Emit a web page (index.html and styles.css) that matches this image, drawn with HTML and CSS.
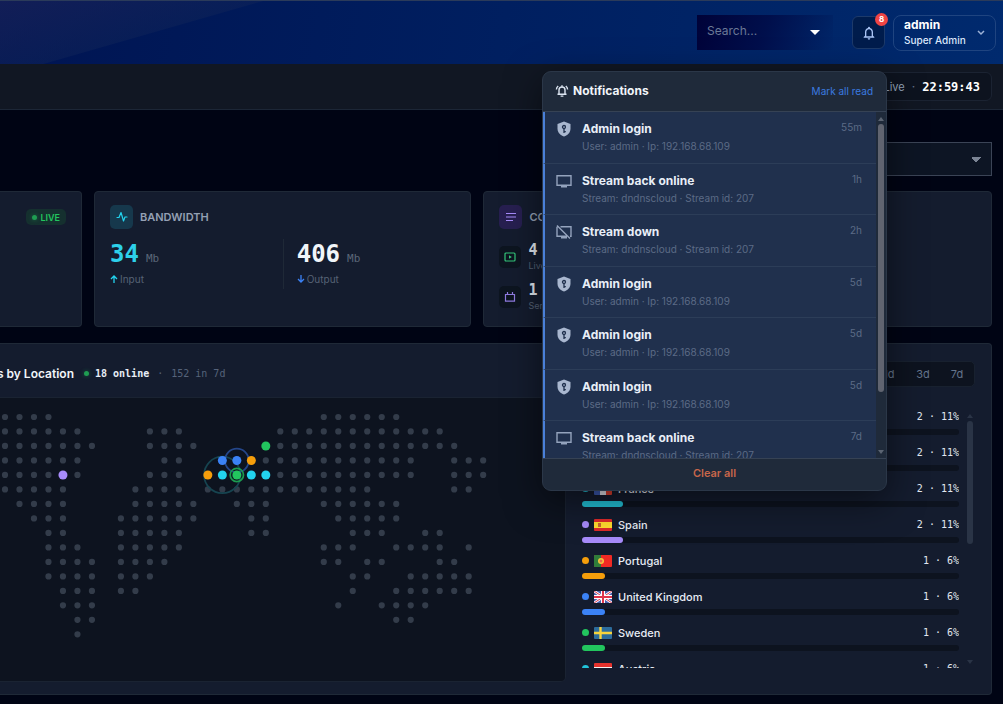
FILE: index.html
```html
<!DOCTYPE html>
<html lang="en">

<head>
    <meta charset="UTF-8">
    <meta name="viewport" content="width=device-width, initial-scale=1.0">
    <title>Dashboard</title>
    <link rel="stylesheet" href="styles.css">
</head>

<body>
    <!-- Top bar -->
    <header class="topbar">
        <div class="search">
            <input type="text" class="search-input" placeholder="Search..." aria-label="Search">
            <button class="search-toggle" aria-label="Search options">
                <svg width="10" height="5" viewBox="0 0 10 5"><path d="M0 0h10L5 5z" fill="#fff"/></svg>
            </button>
        </div>
        <button class="bell-button" aria-label="Notifications">
            <svg width="16" height="16" viewBox="0 0 24 24" fill="#a9c4f5"><path d="M12 22a2 2 0 0 0 2-2h-4a2 2 0 0 0 2 2zm6-6v-5c0-3.070-1.630-5.640-4.500-6.320V4a1.500 1.500 0 0 0-3 0v.68C7.640 5.360 6 7.920 6 11v5l-2 2v1h16v-1l-2-2zm-2 1H8v-6c0-2.480 1.510-4.500 4-4.500s4 2.020 4 4.500v6z"/></svg>
            <span class="badge">8</span>
        </button>
        <button class="user-button">
            <span class="user-text">
                <span class="user-name">admin</span>
                <span class="user-role">Super Admin</span>
            </span>
            <svg width="8" height="6" viewBox="0 0 8 6" fill="none" stroke="#9db2d6" stroke-width="1.5"><path d="M1 1l3 3 3-3"/></svg>
        </button>
    </header>

    <div class="subbar">
        <div class="clock">
            <span class="clock-live">Live</span>
            <span class="clock-sep">·</span>
            <time class="clock-time">22:59:43</time>
        </div>
    </div>

    <main class="content">
        <div class="toolbar">
            <select class="server-select" aria-label="Server">
                <option></option>
            </select>
        </div>

        <!-- Stat cards -->
        <section class="cards">
            <article class="card card-first">
                <span class="live-pill"><i class="live-dot"></i>LIVE</span>
            </article>

            <article class="card">
                <div class="card-head">
                    <span class="card-icon icon-cyan">
                        <svg width="12" height="12" viewBox="0 0 12 12" fill="none" stroke="#22d3ee" stroke-width="1.2" stroke-linejoin="round" stroke-linecap="round"><path d="M1 6.500h2l2-5 2.500 8.500L9 6h2"/></svg>
                    </span>
                    <h2 class="card-title">BANDWIDTH</h2>
                </div>
                <div class="band">
                    <div class="band-col">
                        <div class="band-value cyan">34<small>Mb</small></div>
                        <div class="band-label">
                            <svg width="8" height="8" viewBox="0 0 8 8" fill="none" stroke="#22d3ee" stroke-width="1.3"><path d="M4 8V1M1 4l3-3 3 3"/></svg>
                            Input
                        </div>
                    </div>
                    <div class="band-col">
                        <div class="band-value">406<small>Mb</small></div>
                        <div class="band-label">
                            <svg width="8" height="8" viewBox="0 0 8 8" fill="none" stroke="#3b82f6" stroke-width="1.3"><path d="M4 0v7M1 4l3 3 3-3"/></svg>
                            Output
                        </div>
                    </div>
                </div>
            </article>

            <article class="card">
                <div class="card-head">
                    <span class="card-icon icon-purple">
                        <svg width="12" height="12" viewBox="0 0 12 12" stroke="#a78bfa" stroke-width="1.2"><path d="M1 2.500h10M1 6h10M1 9.500h7"/></svg>
                    </span>
                    <h2 class="card-title">CONTENT</h2>
                </div>
                <div class="counts">
                    <div class="count">
                        <span class="count-icon">
                            <svg width="12" height="10" viewBox="0 0 12 10" fill="none" stroke="#34c77b" stroke-width="1.2"><rect x="1" y="1" width="10" height="8" rx="1"/><path d="M5 3.200v3.600L7.800 5z" fill="#34c77b" stroke="none"/></svg>
                        </span>
                        <div>
                            <div class="count-value">4</div>
                            <div class="count-label">Live</div>
                        </div>
                    </div>
                    <div class="count">
                        <span class="count-icon">
                            <svg width="12" height="10" viewBox="0 0 12 10" fill="none" stroke="#8f7be0" stroke-width="1.2"><path d="M1.500 2.500h9v6.700h-9zM3.500 0v2.500M8.500 0v2.500"/></svg>
                        </span>
                        <div>
                            <div class="count-value">1</div>
                            <div class="count-label">Series</div>
                        </div>
                    </div>
                </div>
            </article>
        </section>

        <!-- Locations -->
        <section class="panel">
            <div class="map-col">
                <div class="map-head">
                    <h2 class="map-title">s by Location</h2>
                    <i class="live-dot"></i>
                    <p class="map-meta"><b>18 online</b><span>·</span><span>152 in 7d</span></p>
                </div>
                <div class="map">
                    <svg viewBox="0 0 565 283" role="img" aria-label="World map">
                        <!-- every run is a row of round dashes, one unit apart -->
                        <g transform="translate(5 19) scale(14.49)">
                            <path class="map-dots" d="M0 0h3.100M22 0h5.100
                                M0 1h5.100M10 1h2.100M19 1h11.100
                                M0 2h6.100M10 2h3.100M19 2h12.100
                                M0 3h5.100M11 3h1.100M18 3h10.100M31 3h2.100
                                M0 4h3.100M5 4h.1M10 4h2.100M19 4h9.100M31 4h2.100
                                M0 5h4.100M9 5h3.100M14 5h11.100M31 5h1.100
                                M1 6h3.100M9 6h4.100M16 6h2.100M22 6h5.100
                                M2 7h2.100M8 7h5.100M17 7h1.100M23 7h4.100
                                M3 8h1.100M8 8h4.100M17 8h1.100M24 8h2.100M29 8h1.100
                                M3 9h2.100M8 9h4.100M22 9h2.100M27 9h3.100M32 9h.1
                                M3 10h3.100M8 10h3.100M22 10h1.100M25 10h1.100M30 10h1.100
                                M3 11h3.100M8 11h2.100M24 11h1.100M28 11h4.100
                                M4 12h2.100M8 12h1.100M24 12h.1M27 12h5.100
                                M4 13h2.100M23 13h.1M26 13h3.100
                                M5 14h1.100M27 14h1.100
                                M5 15h.1"/>
                            <g fill="none" stroke-width=".12">
                                <circle cx="15" cy="4" r="1.26" stroke="#164450"/>
                                <circle cx="16" cy="3" r=".82" stroke="#24468a"/>
                            </g>
                            <circle cx="4" cy="4" r=".31" fill="#a78bfa"/>
                            <circle cx="18" cy="2" r=".31" fill="#22c55e"/>
                            <circle cx="15" cy="3" r=".31" fill="#3b82f6"/>
                            <circle cx="16" cy="3" r=".31" fill="#3b82f6"/>
                            <circle cx="17" cy="3" r=".31" fill="#f59e0b"/>
                            <circle cx="14" cy="4" r=".31" fill="#f59e0b"/>
                            <circle cx="15" cy="4" r=".31" fill="#22d3ee"/>
                            <circle cx="16" cy="4" r=".31" fill="#22c55e"/>
                            <circle cx="16" cy="4" r=".46" fill="none" stroke="#1c9b50" stroke-width=".12"/>
                            <circle cx="17" cy="4" r=".31" fill="#22d3ee"/>
                            <circle cx="18" cy="4" r=".31" fill="#22d3ee"/>
                        </g>
                    </svg>
                </div>
            </div>

            <div class="list-col">
                <div class="ranges">
                    <button class="range">1d</button>
                    <button class="range">3d</button>
                    <button class="range">7d</button>
                </div>
                <div class="list-wrap">
                    <ul class="countries">
                        <li>
                            <div class="country"><span class="country-value">2 · 11%</span></div>
                            <div class="bar"><div class="bar-fill green" style="width: 11%"></div></div>
                        </li>
                        <li>
                            <div class="country"><span class="country-value">2 · 11%</span></div>
                            <div class="bar"><div class="bar-fill blue" style="width: 11%"></div></div>
                        </li>
                        <li>
                            <div class="country">
                                <i class="dot aqua"></i>
                                <svg class="flag" viewBox="0 0 18 12"><path fill="#3d5bb5" d="M0 0h6v12H0z"/><path fill="#e8e8ee" d="M6 0h6v12H6z"/><path fill="#e0402f" d="M12 0h6v12h-6z"/></svg>
                                <span>France</span>
                                <span class="country-value">2 · 11%</span>
                            </div>
                            <div class="bar"><div class="bar-fill aqua" style="width: 11%"></div></div>
                        </li>
                        <li>
                            <div class="country">
                                <i class="dot purple"></i>
                                <svg class="flag" viewBox="0 0 18 12"><path fill="#dd2a2a" d="M0 0h18v12H0z"/><path fill="#ffdb2e" d="M0 3h18v6H0z"/><path fill="#c8682c" d="M4 4h3v4H4z"/></svg>
                                <span>Spain</span>
                                <span class="country-value">2 · 11%</span>
                            </div>
                            <div class="bar"><div class="bar-fill purple" style="width: 11%"></div></div>
                        </li>
                        <li>
                            <div class="country">
                                <i class="dot orange"></i>
                                <svg class="flag" viewBox="0 0 18 12"><path fill="#f02a24" d="M0 0h18v12H0z"/><path fill="#2f7d3a" d="M0 0h7v12H0z"/><circle cx="7" cy="6" r="3" fill="#f2c53d"/><circle cx="7" cy="6" r="1.5" fill="#e86a4a"/></svg>
                                <span>Portugal</span>
                                <span class="country-value">1 · 6%</span>
                            </div>
                            <div class="bar"><div class="bar-fill orange" style="width: 6%"></div></div>
                        </li>
                        <li>
                            <div class="country">
                                <i class="dot blue"></i>
                                <svg class="flag" viewBox="0 0 18 12"><path fill="#4a5fae" d="M0 0h18v12H0z"/><path stroke="#fff" stroke-width="2.6" d="M0 0l18 12M18 0L0 12"/><path stroke="#d8344a" stroke-width="1" d="M0 0l18 12M18 0L0 12"/><path stroke="#fff" stroke-width="4" d="M9 0v12M0 6h18"/><path stroke="#e0354a" stroke-width="2" d="M9 0v12M0 6h18"/></svg>
                                <span>United Kingdom</span>
                                <span class="country-value">1 · 6%</span>
                            </div>
                            <div class="bar"><div class="bar-fill blue" style="width: 6%"></div></div>
                        </li>
                        <li>
                            <div class="country">
                                <i class="dot green"></i>
                                <svg class="flag" viewBox="0 0 18 12"><path fill="#2c6c9c" d="M0 0h18v12H0z"/><path stroke="#f7d33c" stroke-width="2.4" d="M6.500 0v12M0 6h18"/></svg>
                                <span>Sweden</span>
                                <span class="country-value">1 · 6%</span>
                            </div>
                            <div class="bar"><div class="bar-fill green" style="width: 6%"></div></div>
                        </li>
                        <li>
                            <div class="country">
                                <i class="dot aqua"></i>
                                <svg class="flag" viewBox="0 0 18 12"><path fill="#e5322d" d="M0 0h18v12H0z"/><path fill="#f3f3f3" d="M0 4h18v4H0z"/></svg>
                                <span>Austria</span>
                                <span class="country-value">1 · 6%</span>
                            </div>
                            <div class="bar"><div class="bar-fill aqua" style="width: 6%"></div></div>
                        </li>
                    </ul>
                    <div class="scroll scroll-list">
                        <svg width="6" height="4" viewBox="0 0 6 4"><path d="M0 4h6L3 0z"/></svg>
                        <span class="thumb"></span>
                        <svg width="6" height="4" viewBox="0 0 6 4"><path d="M0 0h6L3 4z"/></svg>
                    </div>
                </div>
            </div>
        </section>
    </main>

    <!-- Shared icons -->
    <svg class="sprite" aria-hidden="true">
        <symbol id="shield" viewBox="0 0 16 16">
            <path fill="#a9b7cf" d="M8 .5L1.500 3v4.500c0 3.800 2.700 6.800 6.500 8 3.800-1.200 6.500-4.200 6.500-8V3z"/>
            <circle cx="8" cy="6" r="1.5" fill="none" stroke="#20304d" stroke-width="1.3"/>
            <path fill="none" stroke="#20304d" stroke-width="1.3" d="M8 7.500v4.500M8 10.700h1.800"/>
        </symbol>
        <symbol id="tv" viewBox="0 0 16 16">
            <path fill="none" stroke="#94a3bd" stroke-width="1.4" d="M1 2.700h14v9.600H1z"/>
            <path fill="#94a3bd" d="M5 12.500h6v2H5z"/>
        </symbol>
        <symbol id="tv-off" viewBox="0 0 16 16">
            <path fill="none" stroke="#94a3bd" stroke-width="1.4" d="M4.500 2.700H15v9.600h-1M11 12.300H1V2.700M1 1.500l13 13"/>
            <path fill="#94a3bd" d="M5 12.500h6v2H5z"/>
        </symbol>
    </svg>

    <!-- Notifications dropdown -->
    <div class="notif">
        <div class="notif-head">
            <svg width="14" height="14" viewBox="0 0 14 14" fill="none" stroke="#dde6f2" stroke-width="1.4"><path d="M4 10V6a3 3 0 0 1 6 0v4M2.500 10.300h9M7 1.200v2M1.400 5.500c.1-1.500.7-2.600 1.800-3.500M12.600 5.500c-.1-1.500-.7-2.600-1.800-3.500"/><path d="M5.600 11.500h2.800v1.200H5.600z" fill="#dde6f2" stroke="none"/></svg>
            <h3 class="notif-heading">Notifications</h3>
            <button class="mark-read">Mark all read</button>
        </div>
        <div class="notif-body">
            <ul class="notif-list">
                <li class="notif-item">
                    <svg class="notif-icon"><use href="#shield"/></svg>
                    <div class="notif-text"><div class="notif-title">Admin login</div><div class="notif-sub">User: admin · Ip: 192.168.68.109</div></div>
                    <span class="notif-time">55m</span>
                </li>
                <li class="notif-item">
                    <svg class="notif-icon"><use href="#tv"/></svg>
                    <div class="notif-text"><div class="notif-title">Stream back online</div><div class="notif-sub">Stream: dndnscloud · Stream id: 207</div></div>
                    <span class="notif-time">1h</span>
                </li>
                <li class="notif-item">
                    <svg class="notif-icon"><use href="#tv-off"/></svg>
                    <div class="notif-text"><div class="notif-title">Stream down</div><div class="notif-sub">Stream: dndnscloud · Stream id: 207</div></div>
                    <span class="notif-time">2h</span>
                </li>
                <li class="notif-item">
                    <svg class="notif-icon"><use href="#shield"/></svg>
                    <div class="notif-text"><div class="notif-title">Admin login</div><div class="notif-sub">User: admin · Ip: 192.168.68.109</div></div>
                    <span class="notif-time">5d</span>
                </li>
                <li class="notif-item">
                    <svg class="notif-icon"><use href="#shield"/></svg>
                    <div class="notif-text"><div class="notif-title">Admin login</div><div class="notif-sub">User: admin · Ip: 192.168.68.109</div></div>
                    <span class="notif-time">5d</span>
                </li>
                <li class="notif-item">
                    <svg class="notif-icon"><use href="#shield"/></svg>
                    <div class="notif-text"><div class="notif-title">Admin login</div><div class="notif-sub">User: admin · Ip: 192.168.68.109</div></div>
                    <span class="notif-time">5d</span>
                </li>
                <li class="notif-item">
                    <svg class="notif-icon"><use href="#tv"/></svg>
                    <div class="notif-text"><div class="notif-title">Stream back online</div><div class="notif-sub">Stream: dndnscloud · Stream id: 207</div></div>
                    <span class="notif-time">7d</span>
                </li>
            </ul>
            <div class="scroll scroll-notif">
                <svg width="6" height="4" viewBox="0 0 6 4"><path d="M0 4h6L3 0z"/></svg>
                <span class="thumb"></span>
                <svg width="6" height="4" viewBox="0 0 6 4"><path d="M0 0h6L3 4z"/></svg>
            </div>
        </div>
        <button class="clear-all">Clear all</button>
    </div>
</body>

</html>
```

FILE: styles.css
```css
* {
    box-sizing: border-box;
}

body {
    margin: 0;
    min-height: 100vh;
    background-color: #000414;
    color: #e2e8f0;
    font-family: Inter, "Liberation Sans", sans-serif;
    font-size: 12px;
    overflow: hidden;
}

h2, h3, p, ul {
    margin: 0;
    padding: 0;
}

ul {
    list-style: none;
}

svg {
    display: block;
    flex-shrink: 0;
}

button, input, select {
    font-family: inherit;
    padding: 0;
    border: none;
    background: none;
}

button {
    cursor: pointer;
}

.sprite {
    display: none;
}

/* Top bar */
.topbar {
    display: flex;
    align-items: center;
    justify-content: flex-end;
    height: 64px;
    padding-right: 7px;
    border-top: 1px solid #2b3b5a;
    background:
        linear-gradient(164deg, rgba(30, 36, 90, 0.6) 0, rgba(16, 36, 88, 0.5) 72px, transparent 73px),
        linear-gradient(100deg, #001452, #002a6e);
}

.search {
    display: flex;
    align-items: center;
    width: 136px;
    height: 35px;
    margin-right: 19px;
    background: linear-gradient(110deg, #000238, #000f4c 50%, rgba(0, 40, 110, 0));
}

.search-input {
    flex: 1;
    min-width: 0;
    height: 100%;
    padding: 0 0 4px 10px;
    color: #fff;
    font-size: 12px;
    outline: none;
}

.search-input::placeholder {
    color: #6b7896;
}

.search-toggle {
    display: flex;
    align-items: center;
    justify-content: center;
    width: 36px;
    height: 100%;
}

.bell-button {
    position: relative;
    display: flex;
    align-items: center;
    justify-content: center;
    width: 33px;
    height: 33px;
    margin-right: 8px;
    border: 1px solid #1d3a6a;
    border-radius: 6px;
    background-color: #001c4c;
}

.badge {
    position: absolute;
    top: -4px;
    right: -4px;
    width: 13px;
    height: 13px;
    border-radius: 50%;
    background-color: #ef4444;
    color: #fff;
    font-size: 8px;
    font-weight: 700;
    line-height: 13px;
}

.user-button {
    display: flex;
    align-items: center;
    justify-content: space-between;
    width: 103px;
    height: 36px;
    padding: 0 10px;
    border: 1px solid #1f4480;
    border-radius: 8px;
}

.user-text {
    display: flex;
    flex-direction: column;
    text-align: left;
    white-space: nowrap;
}

.user-name {
    color: #fff;
    font-size: 12px;
    font-weight: 700;
    line-height: 16px;
}

.user-role {
    color: #dbe6fa;
    font-size: 10px;
    font-weight: 500;
    line-height: 15px;
}

.subbar {
    display: flex;
    align-items: center;
    justify-content: flex-end;
    height: 46px;
    padding-right: 11px;
    border-bottom: 1px solid #1c2636;
    background-color: #111723;
}

.clock {
    display: flex;
    align-items: center;
    gap: 7px;
    height: 29px;
    padding: 0 11px 0 12px;
    border: 1px solid #1b2332;
    border-radius: 6px;
    background-color: #0d131f;
}

.clock-live {
    color: #94a3b8;
    font-size: 11px;
}

.clock-sep {
    color: #64748b;
}

.clock-time {
    color: #fff;
    font: bold 12px "DejaVu Sans Mono", monospace;
}

/* Content */
.content {
    padding: 32px 11px 0 0;
}

.toolbar {
    display: flex;
    justify-content: flex-end;
    margin-bottom: 15px;
}

.server-select {
    width: 240px;
    height: 34px;
    border: 1px solid #3b4456;
    border-radius: 0;
    appearance: none;
    background: conic-gradient(from -45deg at 50% 100%, #7b8494 90deg, transparent 0) no-repeat right 10px center / 10px 5px, #0d1524;
}

.cards {
    display: grid;
    grid-template-columns: 82px minmax(0, 377fr) minmax(0, 508fr);
    gap: 12px;
    margin-bottom: 16px;
}

.card {
    min-height: 136px;
    padding: 13px 15px 11px;
    border: 1px solid #1f2937;
    border-radius: 4px;
    background-color: #141c2e;
}

.card-first {
    display: flex;
    align-items: flex-start;
    justify-content: flex-end;
    padding-top: 17px;
    border-left: none;
    border-top-left-radius: 0;
    border-bottom-left-radius: 0;
}

.live-pill {
    display: flex;
    align-items: center;
    gap: 3px;
    height: 16px;
    padding: 0 6px;
    border-radius: 5px;
    background-color: #15302f;
    color: #22c55e;
    font-size: 9px;
    font-weight: 600;
}

.live-dot {
    width: 5px;
    height: 5px;
    border-radius: 50%;
    background-color: #1f9d52;
    box-shadow: 0 0 4px rgba(34, 197, 94, 0.4);
}

.card-head {
    display: flex;
    align-items: center;
    gap: 7px;
    margin-bottom: 10px;
}

.card-icon {
    display: flex;
    align-items: center;
    justify-content: center;
    width: 23px;
    height: 24px;
    border-radius: 5px;
}

.icon-cyan {
    background-color: #16384c;
}

.icon-purple {
    background-color: #271f50;
}

.card-title {
    color: #94a0b4;
    font-size: 11px;
    font-weight: 600;
}

.band {
    display: grid;
    grid-template-columns: 1fr 1fr;
    height: 50px;
}

.band-col + .band-col {
    padding-left: 13px;
    border-left: 1px solid #1f2937;
}

.band-value {
    display: flex;
    align-items: baseline;
    gap: 7px;
    color: #f1f5f9;
    font: bold 24px/30px "DejaVu Sans Mono", monospace;
}

.band-value small {
    color: #5b6779;
    font-size: 11px;
    font-weight: normal;
    line-height: 1;
}

.band-value.cyan {
    color: #2dd0ea;
}

.band-label {
    display: flex;
    align-items: center;
    gap: 2px;
    color: #566275;
    font-size: 10px;
    line-height: 20px;
}

.counts {
    display: grid;
    gap: 4px;
}

.count {
    display: flex;
    align-items: center;
    gap: 7px;
    height: 36px;
}

.count-icon {
    display: flex;
    align-items: center;
    justify-content: center;
    width: 22px;
    height: 22px;
    border-radius: 5px;
    background-color: #0d1520;
}

.count-value {
    color: #e2e8f0;
    font: bold 15px/18px "DejaVu Sans Mono", monospace;
}

.count-label {
    color: #566275;
    font-size: 9px;
    line-height: 14px;
}

/* Locations panel */
.panel {
    display: grid;
    grid-template-columns: minmax(0, 1fr) 393px;
    gap: 16px;
    padding: 0 16px 12px 0;
    border: 1px solid #1f2937;
    border-left: none;
    border-radius: 0 4px 4px 0;
    background-color: #141c2e;
}

.map-head {
    display: flex;
    align-items: center;
    height: 53px;
    padding-top: 6px;
}

.map-title {
    display: flex;
    justify-content: flex-end;
    width: 74px;
    margin-right: 10px;
    color: #f1f5f9;
    font-size: 12px;
    font-weight: 600;
    white-space: nowrap;
}

.map-meta {
    display: flex;
    gap: 8px;
    margin-left: 6px;
    color: #56637a;
    font: 10px "DejaVu Sans Mono", monospace;
}

.map-meta b {
    color: #e8eef6;
}

.map {
    border: 1px solid #1a2332;
    border-left: none;
    border-radius: 0 0 5px 0;
    background-color: #0d131f;
}

.map svg {
    width: 100%;
}

.map-dots {
    fill: none;
    stroke: #333c4a;
    stroke-width: 0.43;
    stroke-linecap: round;
    stroke-dasharray: 0 1;
}

.list-col {
    padding-top: 17px;
}

.ranges {
    display: flex;
    justify-content: flex-end;
    width: 140px;
    height: 26px;
    margin: 0 0 21px auto;
    border: 1px solid #18212f;
    border-radius: 5px;
    background-color: #0d131f;
}

.range {
    width: 34px;
    color: #64748b;
    font-size: 11px;
}

.list-wrap {
    display: flex;
    gap: 7px;
    height: 260px;
    padding-right: 2px;
}

.countries {
    flex: 1;
    overflow: hidden;
}

.countries li {
    margin-bottom: 9px;
}

.country {
    display: flex;
    align-items: center;
    height: 17px;
    margin-bottom: 4px;
    color: #e8edf5;
    font-size: 11px;
    font-weight: 500;
}

.dot {
    width: 7px;
    height: 7px;
    margin-right: 5px;
    border-radius: 50%;
}

.flag {
    width: 18px;
    height: 12px;
    margin-right: 6px;
    border-radius: 1px;
}

.country-value {
    margin-left: auto;
    color: #e2e8f0;
    font: 10px "DejaVu Sans Mono", monospace;
}

.bar {
    height: 6px;
    border-radius: 3px;
    background-color: #0d131f;
}

.bar-fill {
    height: 100%;
    border-radius: 3px;
}

.aqua {
    background-color: #22c3d9;
}

.purple {
    background-color: #a78bfa;
}

.orange {
    background-color: #f59e0b;
}

.blue {
    background-color: #3b82f6;
}

.green {
    background-color: #22c55e;
}

/* Scrollbars */
.scroll {
    display: flex;
    flex-direction: column;
    align-items: center;
}

.scroll svg:last-child {
    margin-top: auto;
}

.thumb {
    width: 6px;
    border-radius: 3px;
}

.scroll-list {
    width: 7px;
    padding: 6px 0 4px;
    fill: #2a3446;
}

.scroll-list .thumb {
    height: 123px;
    margin-top: 3px;
    background-color: #2a3446;
}

.scroll-notif {
    width: 10px;
    padding: 5px 0 4px;
    background-color: #1f2a3a;
    fill: #5b6472;
}

.scroll-notif .thumb {
    height: 268px;
    margin-top: 3px;
    background-color: #606470;
}

/* Notifications dropdown, over the page */
.notif {
    position: absolute;
    top: 71px;
    right: 116px;
    width: 345px;
    border: 1px solid #2b3748;
    border-radius: 9px;
    background-color: #1f2a3a;
    box-shadow: 0 10px 36px rgba(0, 0, 0, 0.5);
    overflow: hidden;
}

.notif-head {
    display: flex;
    align-items: center;
    gap: 4px;
    height: 40px;
    padding: 0 13px 2px 12px;
    border-bottom: 1px solid #364254;
}

.notif-heading {
    color: #f1f5f9;
    font-size: 12px;
    font-weight: 700;
}

.mark-read {
    margin-left: auto;
    color: #3b7be0;
    font-size: 10px;
}

.notif-body {
    display: flex;
    height: 346px;
}

.notif-list {
    flex: 1;
    overflow: hidden;
}

.notif-item {
    display: flex;
    gap: 10px;
    padding: 8px 14px 8px 11px;
    border-left: 2px solid #4a80d8;
    border-bottom: 1px solid #2c3d58;
    background-color: #20304d;
    line-height: 1.5;
}

.notif-icon {
    width: 16px;
    height: 16px;
    margin-top: 1px;
}

.notif-text {
    flex: 1;
}

.notif-title {
    color: #e8eef7;
    font-size: 12px;
    font-weight: 700;
}

.notif-sub {
    color: #5c6b86;
    font-size: 10px;
    line-height: 1.65;
}

.notif-time {
    color: #5c6b86;
    font-size: 10px;
}

.clear-all {
    width: 100%;
    height: 32px;
    padding-bottom: 3px;
    border-top: 1px solid #364254;
    color: #c8664a;
    font-size: 11px;
    font-weight: 600;
}
```
